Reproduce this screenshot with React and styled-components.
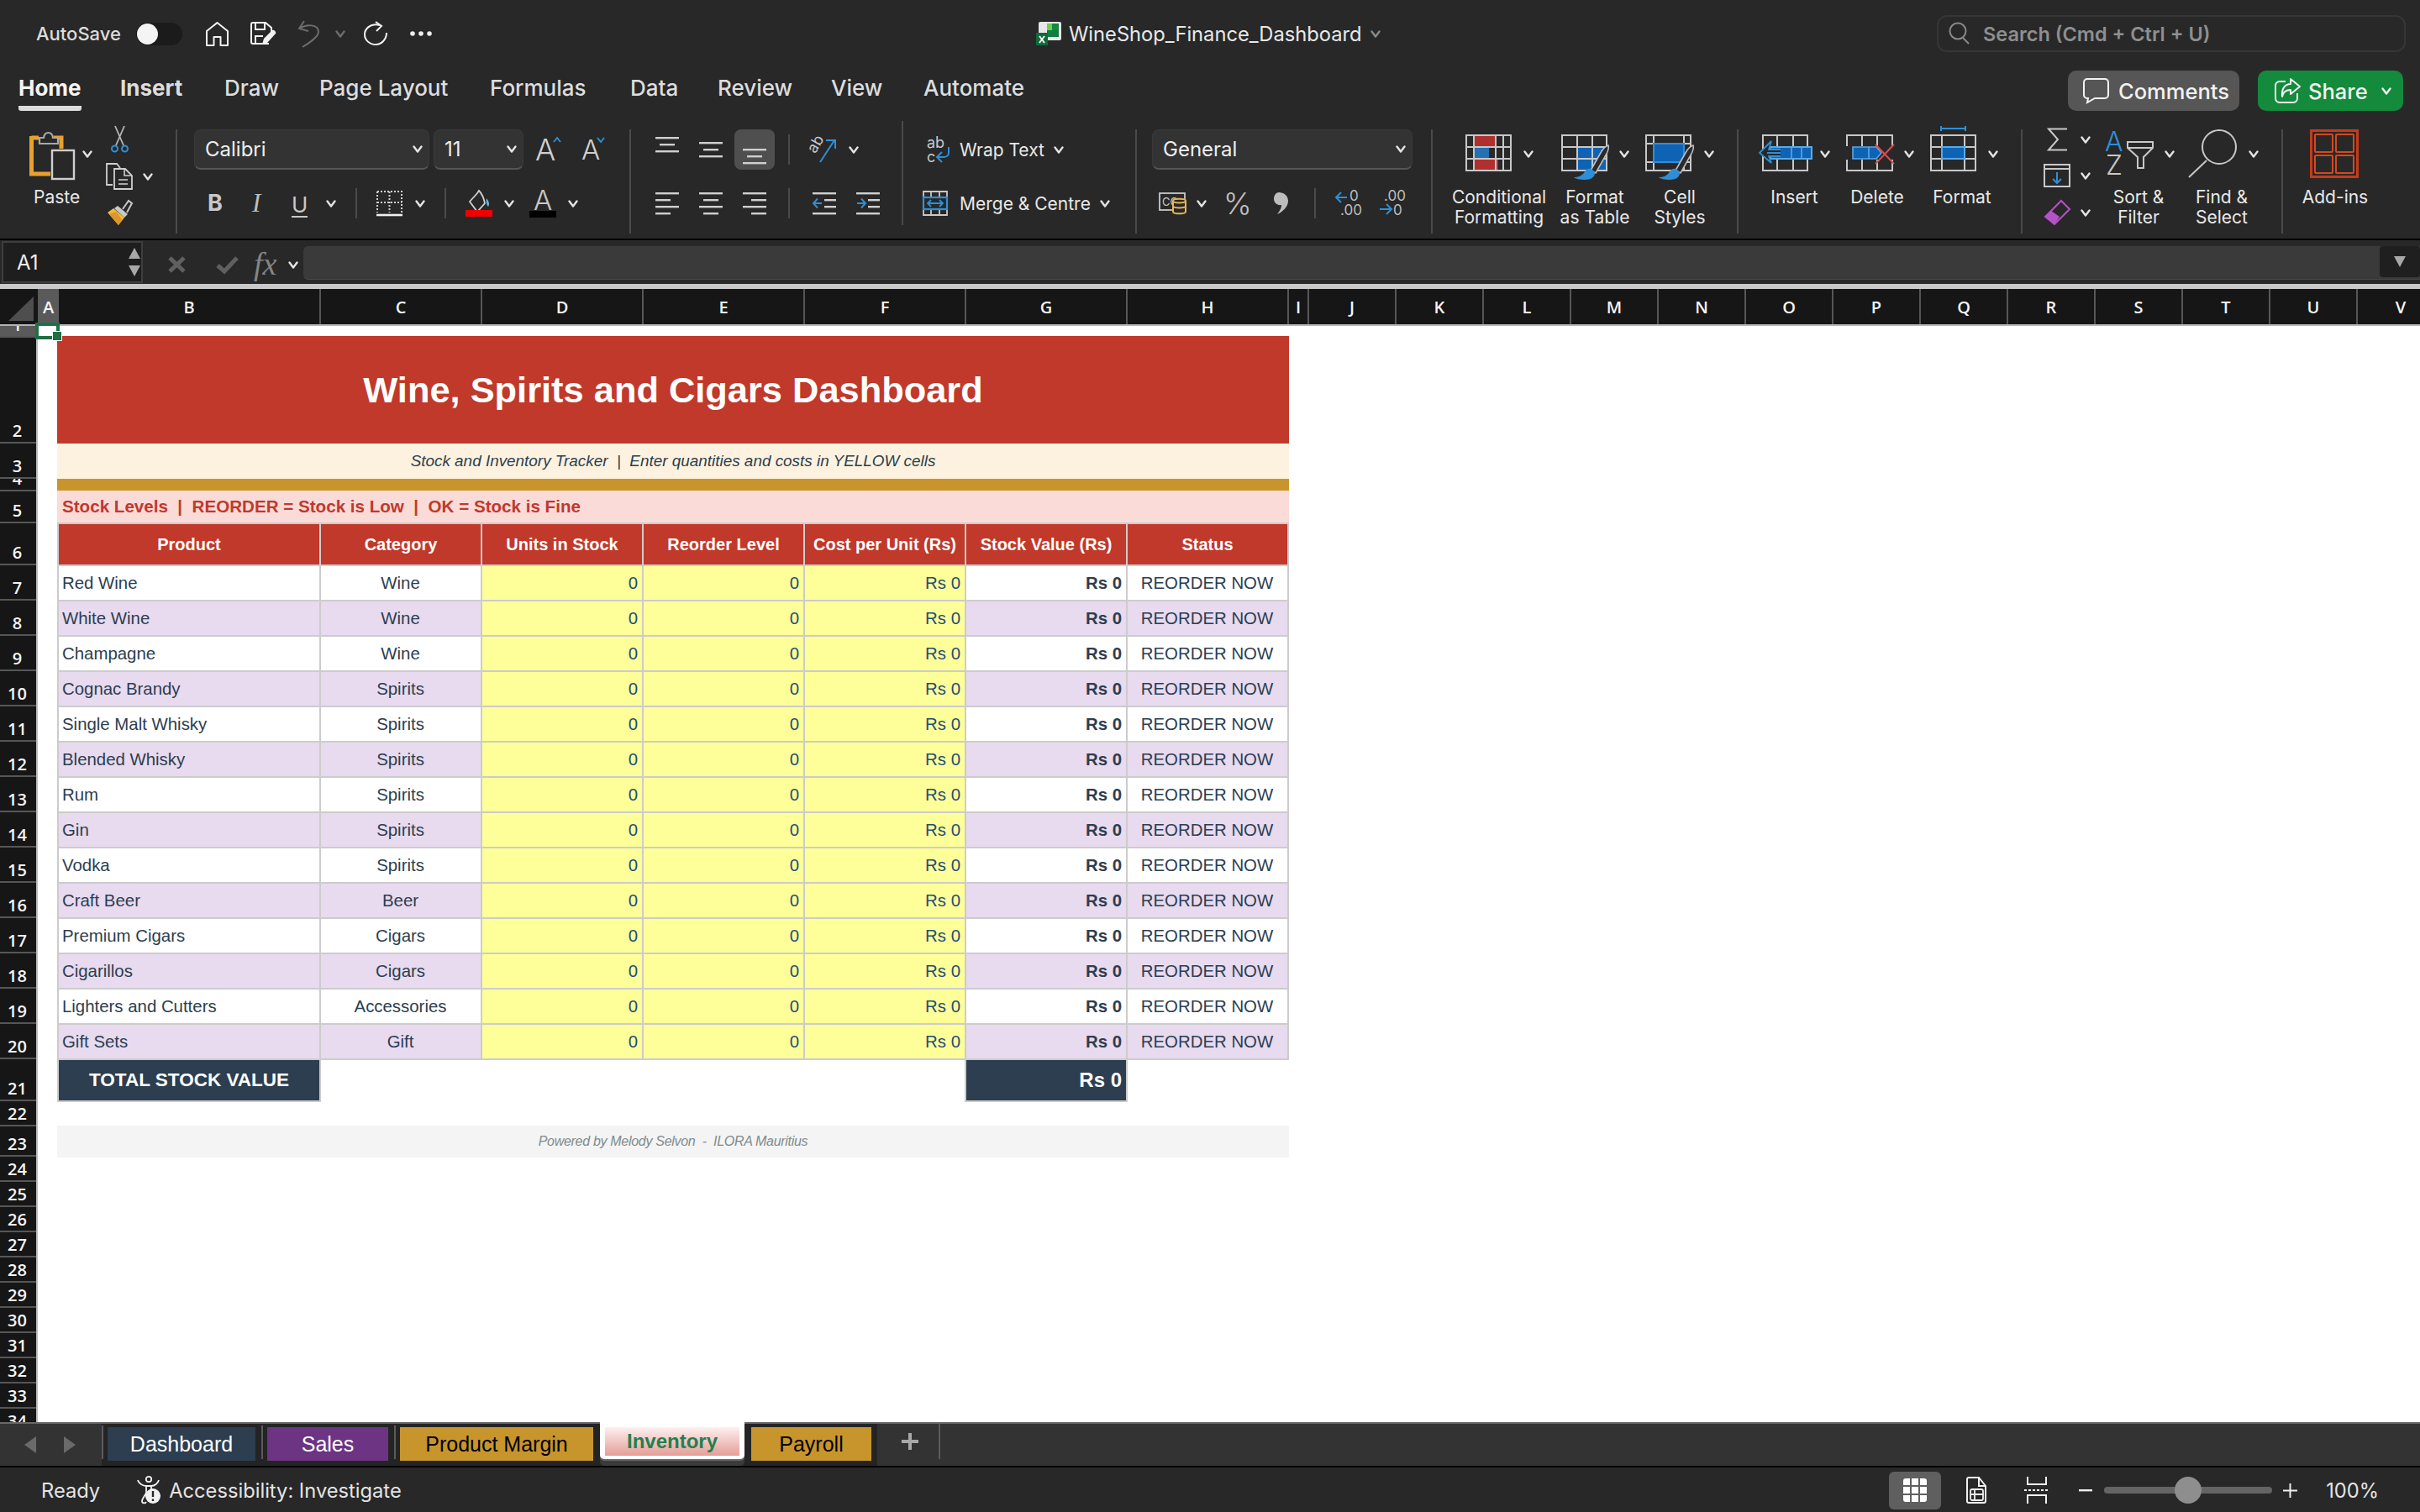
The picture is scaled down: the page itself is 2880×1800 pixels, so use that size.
import React from "react";
import styled, { createGlobalStyle } from "styled-components";

const UI = 'Inter, "Liberation Sans", sans-serif';
const CELL = '"Liberation Sans", Arial, sans-serif';
const HEAD = '"Open Sans", "Liberation Sans", sans-serif';
const LINE = "#c8c8c8";
const BLUE = "#2f8fd6";
const FILLBLUE = "#0f63b5";

const Global = createGlobalStyle`
  html, body { margin: 0; padding: 0; background: #282828; overflow: hidden; }
  * { box-sizing: border-box; }
`;

const Window = styled.div`
  width: 2880px; height: 1800px; overflow: hidden; display: flex; flex-direction: column;
  background: #282828; color: #e6e6e6; font-family: ${UI};
`;

/* ---------- generic drawing helpers ---------- */
const Svg = styled.svg`display: block; flex: none; overflow: visible;`;
const Ico = ({ w, h, children }) => (
  <Svg width={w} height={h} viewBox={`0 0 ${w} ${h}`} fill="none">{children}</Svg>
);
const Slot = styled.span`
  display: flex; flex: none; align-items: center;
  margin-left: ${p => p.$ml || 0}px; margin-top: ${p => p.$mt || 0}px;
`;
const Chev = ({ ml = 0, mt = 0, c = "#e4e4e4" }) => (
  <Slot $ml={ml} $mt={mt}>
    <Ico w={12} h={9}><path d="M1.5 1.5L6 7.5L10.5 1.5" stroke={c} strokeWidth="2.4" strokeLinecap="round" strokeLinejoin="round" /></Ico>
  </Slot>
);

/* ---------- title bar ---------- */
const TitleBar = styled.div`height: 80px; display: flex; align-items: center; flex: none;`;
const QuickAccess = styled.div`width: 1233px; padding-left: 43px; display: flex; align-items: center; flex: none;`;
const QuickLabel = styled.span`font-size: 22px; font-weight: 500; color: #dcdcdc; width: 119px; flex: none;`;
const Toggle = styled.span`
  width: 55px; height: 27px; border-radius: 14px; background: #1b1b1b; display: flex; align-items: center;
  padding-left: 1px; flex: none;
`;
const ToggleKnob = styled.span`width: 25px; height: 25px; border-radius: 50%; background: #f4f4f4;`;
const DocTitle = styled.div`width: 1072px; display: flex; align-items: center; flex: none;`;
const DocName = styled.span`font-size: 23.7px; color: #e8e8e8; margin-left: 9px; white-space: nowrap;`;
const SearchBox = styled.div`
  width: 558px; height: 44px; border: 2px solid #363636; border-radius: 12px; display: flex; align-items: center;
  padding-left: 12px; flex: none;
`;
const SearchText = styled.span`font-size: 23.5px; font-weight: 600; color: #8f8f8f; margin-left: 15px; white-space: nowrap;`;

/* ---------- menu tabs ---------- */
const MenuRow = styled.div`height: 56px; display: flex; align-items: flex-start; padding-left: 22px; flex: none;`;
const MenuTab = styled.div`width: ${p => p.$w}px; flex: none; height: 52px; padding-top: 9px;`;
const MenuLabel = styled.span`
  display: inline-block; height: 43px; font-size: 26px; line-height: 32px; white-space: nowrap;
  font-weight: ${p => p.$weight || 500};
  color: ${p => (p.$active ? "#f4f4f4" : "#dddddd")};
  border-bottom: 6px solid ${p => (p.$active ? "#dcdcdc" : "transparent")};
  border-radius: 0 0 3px 3px;
`;
const MenuActions = styled.div`margin-left: auto; margin-top: 4px; display: flex; gap: 22px; padding-right: 20px;`;
const PillButton = styled.div`
  height: 48px; width: ${p => p.$w}px; border-radius: 10px; background: ${p => p.$bg};
  display: flex; align-items: center; padding-left: ${p => p.$pl}px; font-size: 25.5px; font-weight: 500; color: #f2f2f2;
`;
const PillText = styled.span`margin-left: ${p => p.$ml}px;`;

/* ---------- ribbon ---------- */
const Ribbon = styled.div`
  height: 148px; padding-top: 8px; display: flex; align-items: flex-start; flex: none;
  font-size: 21px; color: #e8e8e8;
`;
const GroupSep = styled.div`
  width: 2px; height: 124px; flex: none; background: #4a4a4a; margin-top: ${p => p.$mt ?? 10}px;
`;
const Group = styled.div`
  width: ${p => p.$w}px; flex: none; display: flex; align-items: flex-start; padding-left: ${p => p.$pl || 0}px;
  padding-top: ${p => p.$pt ?? 10}px; flex-direction: ${p => (p.$col ? "column" : "row")};
`;
const ToolRow = styled.div`
  display: flex; align-items: center; flex: none; height: ${p => p.$h}px; margin-top: ${p => p.$mt || 0}px;
`;
const PasteCol = styled.div`width: 62px; flex: none; display: flex; flex-direction: column; align-items: flex-start;`;
const PasteLabel = styled.span`margin: 7px 0 0 5px; line-height: 28px;`;
const StackCol = styled.div`
  display: flex; flex-direction: column; flex: none; gap: ${p => p.$gap}px;
  margin-left: ${p => p.$ml}px; margin-top: ${p => p.$mt}px; width: ${p => p.$w}px;
`;
const StackRow = styled.div`display: flex; align-items: center;`;
const Select = styled.div`
  width: ${p => p.$w}px; height: 48px; flex: none; background: #333333; border: 1px solid #3a3a3a;
  border-bottom: 2px solid #555; border-radius: 8px; display: flex; align-items: center; justify-content: space-between;
  padding: 0 7px 0 12px; font-size: 24px; color: #eeeeee; margin-left: ${p => p.$ml || 0}px;
`;
const GrowA = styled.span`
  font-size: ${p => p.$size}px; font-weight: 300; color: #cfcfcf; line-height: 36px; width: ${p => p.$w}px; flex: none;
  margin-left: ${p => p.$ml}px; display: flex; align-items: flex-start; position: relative;
`;
const Caret = styled.span`position: absolute; right: 0; top: ${p => p.$top}px;`;
const FaceB = styled.span`font-size: 27px; font-weight: 700; color: #c8c8c8; margin-left: 16px; width: 16px; line-height: 30px;`;
const FaceI = styled.span`font-family: "Liberation Serif", serif; font-style: italic; font-size: 31px; color: #bdbdbd; margin-left: 37px; width: 14px; line-height: 30px;`;
const FaceU = styled.span`font-size: 26px; color: #c8c8c8; margin-left: 33px; width: 19px; line-height: 27px; border-bottom: 2.5px solid #c8c8c8; text-align: center; margin-top: 5px;`;
const MiniSep = styled.div`width: 2px; height: 36px; background: #4a4a4a; flex: none; margin-left: ${p => p.$ml}px;`;
const ColorA = styled.div`
  width: 32px; margin-left: ${p => p.$ml}px; display: flex; flex-direction: column; align-items: center; flex: none;
  font-size: 33px; font-weight: 300; color: #c8c8c8; line-height: 26px; height: 34px;
`;
const ColorBar = styled.span`display: block; width: 32px; height: 8px; background: ${p => p.$c}; flex: none;`;
const ActiveTool = styled.div`
  width: 48px; height: 48px; margin-left: ${p => p.$ml}px; border-radius: 8px; background: #4f4f4f;
  display: flex; justify-content: center; flex: none;
`;
const ToolText = styled.span`margin-left: ${p => p.$ml}px; white-space: nowrap; font-size: 21px;`;
const Percent = styled.span`font-size: 36px; font-weight: 300; color: #c0c0c0; margin-left: ${p => p.$ml}px; width: 31px; line-height: 36px; flex: none;`;
const BigTool = styled.div`
  width: ${p => p.$w}px; flex: none; margin-left: ${p => p.$ml || 0}px; padding-top: ${p => p.$pt || 0}px; display: flex; flex-direction: column;
`;
const BigIcon = styled.div`height: 69px; display: flex; align-items: flex-start; padding-left: ${p => p.$pl || 0}px; flex: none;`;
const BigLabel = styled.div`text-align: center; line-height: 24px; white-space: nowrap; display: flex; flex-direction: column; align-items: center;`;

/* ---------- formula bar ---------- */
const BlackRule = styled.div`height: ${p => p.$h}px; background: ${p => p.$c || "#000"}; flex: none;`;
const FormulaBar = styled.div`height: 52px; display: flex; align-items: flex-start; flex: none; background: #282828;`;
const NameBox = styled.div`
  width: 168px; height: 50px; margin: 1px 0 0 2px; flex: none; background: #1e1e1e; border: 2px solid #3e3e3e;
  display: flex; align-items: center; justify-content: space-between; padding: 0 0 0 16px; font-size: 24px; color: #eee;
`;
const NameSpin = styled.div`display: flex; flex-direction: column; gap: 8px; padding-right: 1px;`;
const Fx = styled.span`
  font-family: "Liberation Serif", serif; font-style: italic; font-size: 38px; color: #858585; margin-left: 18px; line-height: 36px; width: 31px;
`;
const FormulaInput = styled.div`
  flex: 1; height: 40px; margin: 7px 0 0 6px; background: #3a3a3a; border-radius: 6px 0 0 6px; border-bottom: 1px solid #484848;
  display: flex; justify-content: flex-end;
`;
const FormulaExpand = styled.div`
  width: 48px; height: 37px; background: #1f1f1f; border-radius: 4px; display: flex; align-items: center; justify-content: center;
`;

/* ---------- sheet ---------- */
const Sheet = styled.div`height: 1349px; flex: none; background: #fff; display: flex; flex-direction: column; overflow: hidden;`;
const ColHeaderRow = styled.div`
  height: 44px; display: flex; flex: none; background: #161616; border-bottom: 2px solid #b5b5b5;
`;
const Corner = styled.div`width: 45px; flex: none; padding: 9px 0 0 10px;`;
const ColHead = styled.div`
  width: ${p => p.$w}px; flex: none; background: ${p => (p.$sel ? "#5a5a5a" : "#161616")};
  border-right: ${p => (p.$sel ? "0" : "2px solid #565656")};
  display: flex; align-items: center; justify-content: center;
  font-family: ${HEAD}; font-size: 20px; font-weight: 600; color: #f5f5f5;
`;
const SheetBody = styled.div`flex: 1; display: flex; min-height: 0; position: relative;`;
const RowHeaders = styled.div`
  width: 45px; flex: none; background: #161616; border-right: 2px solid #bdbdbd; display: flex; flex-direction: column;
`;
const RowHead = styled.div`
  height: ${p => p.$h}px; flex: none; overflow: hidden; background: ${p => (p.$sel ? "#5a5a5a" : "#161616")};
  border-bottom: 2px solid #565656; display: flex; align-items: flex-end; justify-content: center;
  font-family: ${HEAD}; font-size: 20px; font-weight: 600; color: #f5f5f5; line-height: 26px; padding-right: 2px;
`;
const Cursor = styled.div`
  position: absolute; left: 42px; top: -4px; width: 29px; height: 20px; border: 4px solid #1d6f46;
  &::after { content: ""; position: absolute; right: -7px; bottom: -6px; width: 10px; height: 10px; background: #1d6f46; border: 1px solid #fff; }
`;
const Canvas = styled.div`flex: 1; padding: 12px 0 0 23px; display: flex; flex-direction: column; align-items: flex-start;`;
const Banner = styled.div`
  width: 1466px; height: ${p => p.$h}px; flex: none; background: ${p => p.$bg}; display: flex; align-items: center;
  justify-content: ${p => (p.$left ? "flex-start" : "center")}; padding-left: ${p => (p.$left ? 6 : 0)}px; white-space: pre;
  font-family: ${CELL};
`;
const BannerTitle = styled.span`font-size: 43.4px; font-weight: 700; color: #fff;`;
const BannerSub = styled.span`font-size: 18.9px; font-style: italic; color: #2c3e50;`;
const BannerNote = styled.span`font-size: 20.6px; font-weight: 700; color: #c0392b;`;
const BannerFoot = styled.span`font-size: 16px; font-style: italic; color: #7f8c8d; letter-spacing: -0.3px;`;
const TableGrid = styled.div`
  width: 1466px; flex: none; display: grid; grid-template-columns: 310px repeat(6, 190px);
  grid-template-rows: 48px repeat(14, 40px);
  gap: 2px; padding: 2px; background: #cccccc; font-family: ${CELL}; font-size: 20.4px;
`;
const HeadCell = styled.div`
  background: #c0392b; color: #fff; font-weight: 700; font-size: 20px; display: flex; align-items: center; justify-content: center; white-space: nowrap;
`;
const DataCell = styled.div`
  background: ${p => p.$bg}; color: ${p => p.$fg || "#2c3e50"}; font-weight: ${p => (p.$bold ? 700 : 400)};
  display: flex; align-items: center; padding: 0 5px 0 4px; white-space: nowrap;
  justify-content: ${p => p.$align || "flex-start"};
`;
const TotalRow = styled.div`display: flex; flex: none; font-family: ${CELL}; color: #fff; font-weight: 700;`;
const TotalCell = styled.div`
  width: ${p => p.$w}px; height: 50px; margin-left: ${p => p.$ml || 0}px; background: #2c3e50; border: 2px solid #cccccc; border-top: 0;
  display: flex; align-items: center; justify-content: ${p => p.$align}; font-size: ${p => p.$fs}px; padding-right: 5px; padding-left: 5px; flex: none;
`;
const FootGap = styled.div`height: 28px; flex: none;`;

/* ---------- sheet tabs ---------- */
const TabBar = styled.div`
  height: 52px; flex: none; background: #333333; border-top: 2px solid #686868; display: flex; align-items: flex-start; position: relative;
`;
const NavArrows = styled.div`width: 121px; height: 100%; display: flex; align-items: center; gap: 33px; padding: 0 0 0 29px; flex: none;`;
const TabStrip = styled.div`
  display: flex; height: 50px; background: #242424; padding-top: 4px; align-items: flex-start; flex: none;
`;
const TabSep = styled.div`width: 2px; height: 40px; background: #5a5a5a; flex: none; margin-top: -2px; margin-right: 5px;`;
const SheetTab = styled.div`
  width: ${p => p.$w}px; height: 40px; flex: none; background: ${p => p.$bg}; color: ${p => p.$fg};
  margin-right: ${p => p.$mr}px; display: flex; align-items: center; justify-content: center;
  font-family: ${CELL}; font-size: 25px;
`;
const ActiveTabFrame = styled.div`
  width: 172px; height: 44px; flex: none; background: #fff; margin: -6px 8px 0 8px; padding: 6px 6px 4px;
  border-radius: 0 0 5px 5px; box-shadow: 0 2px 0 #666, 0 8px 0 #3b3b3b;
`;
const ActiveTab = styled.div`
  height: 34px; background: linear-gradient(#fdf0f0, #e59d97); color: #23804f; font-family: ${CELL}; font-size: 24px; font-weight: 700;
  display: flex; align-items: center; justify-content: center;
`;
const AddTab = styled.div`width: 75px; height: 42px; flex: none; border-right: 2px solid #5a5a5a; display: flex; align-items: center; padding-left: 29px; margin-top: 0;`;
const StatusRule = styled.div`height: 2px; flex: none; background: #000;`;

/* ---------- status bar ---------- */
const StatusBar = styled.div`
  height: 54px; flex: none; display: flex; align-items: center; padding: 0 49px; font-size: 23.7px; color: #e4e4e4; white-space: nowrap;
`;
const StatusSpacer = styled.div`flex: 1;`;
const ViewActive = styled.div`
  width: 62px; height: 45px; border-radius: 6px; background: #5f5f5f; display: flex; align-items: center; justify-content: center; flex: none;
`;
const ZoomTrack = styled.div`width: 200px; height: 8px; background: #646464; border-radius: 4px; margin-left: 14px; position: relative; flex: none;`;
const ZoomKnob = styled.div`position: absolute; left: 84px; top: -12px; width: 32px; height: 32px; border-radius: 50%; background: #8e8e8e;`;
const ZoomPct = styled.span`margin-left: 34px;`;

/* ---------- icons ---------- */
const TableOutline = ({ w = 55, h = 43, y = 0, x = 0, cols, rows }) => (
  <g stroke={LINE} strokeWidth="2">
    <rect x={x + 1} y={y + 1} width={w - 2} height={h - 2} />
    {cols.map(c => <path key={c} d={`M${x + c} ${y}V${y + h}`} />)}
    {rows.map(r => <path key={r} d={`M${x} ${y + r}H${x + w}`} />)}
  </g>
);
const Brush = ({ dx = 0, dy = 0 }) => (
  <g transform={`translate(${dx} ${dy})`}>
    <path d="M42 0C43 3 42 6 40 10L27 33L21 30L34 7C36 4 39 1 42 0Z" fill="#2a2a2a" stroke="#bdbdbd" strokeWidth="1.6" />
    <path d="M15 30C19 26 24 28 26 33C26 38 21 41 14 41C8 41 3 40 1 38C6 38 11 37 15 30Z" fill={BLUE} />
  </g>
);

const icons = {
  home: <Ico w={29} h={30}><path d="M2 29V12L14.5 2L27 12V29H18.5V19H10.5V29Z" stroke="#f2f2f2" strokeWidth="2" strokeLinejoin="round" /></Ico>,
  save: (
    <Ico w={31} h={30}>
      <path d="M22 26H3a2 2 0 0 1-2-2V3a2 2 0 0 1 2-2h15l7 6v6" stroke="#f2f2f2" strokeWidth="2" />
      <path d="M6 1V9H17V1M6 26V17H15" stroke="#f2f2f2" strokeWidth="2" />
      <path d="M14 27L16 20L26 10C28 9 31 12 30 14L20 25Z" fill="#f2f2f2" />
    </Ico>
  ),
  undo: (
    <Ico w={27} h={32}>
      <path d="M8 1L2 10L13 13M2 10C10 5 25 4 25 14C25 20 14 27 6 32" stroke="#6c6c6c" strokeWidth="2" />
    </Ico>
  ),
  redo: (
    <Ico w={28} h={28}>
      <path d="M19 4C7 1 1 9 1 15C1 22 7 27 14 27C21 27 27 21 27 13" stroke="#f2f2f2" strokeWidth="2" />
      <path d="M14 0L21 5L15 11" stroke="#f2f2f2" strokeWidth="2" />
    </Ico>
  ),
  dots: <Ico w={26} h={6}><circle cx="3" cy="3" r="2.8" fill="#efefef" /><circle cx="13" cy="3" r="2.8" fill="#efefef" /><circle cx="23" cy="3" r="2.8" fill="#efefef" /></Ico>,
  excel: (
    <Ico w={30} h={28}>
      <rect x="3" y="0" width="27" height="22" rx="2" fill="#e8e8e8" />
      <rect x="13" y="2" width="6" height="8" fill="#6fd04e" />
      <rect x="19" y="2" width="8" height="10" fill="#12893e" />
      <rect x="13" y="10" width="14" height="8" fill="#107c41" />
      <rect x="0" y="13" width="14" height="15" fill="#0e6b3a" />
      <path d="M4 17L10 25M10 17L4 25" stroke="#fff" strokeWidth="2" />
    </Ico>
  ),
  search: <Ico w={26} h={26}><circle cx="11" cy="10" r="9.5" stroke="#8a8a8a" strokeWidth="2" /><path d="M17 18L24 25" stroke="#8a8a8a" strokeWidth="2" /></Ico>,
  comment: <Ico w={32} h={30}><path d="M6 1H27a4 4 0 0 1 4 4V20a4 4 0 0 1-4 4H15L6 29L7 24H6a4 4 0 0 1-4-4V5a4 4 0 0 1 4-4Z" stroke="#f2f2f2" strokeWidth="2" /></Ico>,
  share: (
    <Ico w={31} h={30}>
      <path d="M13 4H6a5 5 0 0 0-5 5V24a5 5 0 0 0 5 5H22a5 5 0 0 0 5-5V18" stroke="#f2f2f2" strokeWidth="2" />
      <path d="M19 1L30 10L19 19V14C13 14 10 17 9 22C8 13 12 7 19 7Z" stroke="#f2f2f2" strokeWidth="2" strokeLinejoin="round" />
    </Ico>
  ),
  paste: (
    <Ico w={54} h={60}>
      <path d="M2.5 10H11M2.5 8V53H25" stroke="#e9a02e" strokeWidth="5" />
      <path d="M29 10H38V23" stroke="#e9a02e" strokeWidth="5" />
      <path d="M12 17V10H17C18 2 27 2 28 10H34V17Z" stroke="#a8a8a8" strokeWidth="2.2" fill="#282828" />
      <rect x="27" y="25" width="26" height="34" stroke="#cfcfcf" strokeWidth="2.4" />
    </Ico>
  ),
  cut: (
    <Ico w={21} h={32}>
      <path d="M5 0L15 23M16 0L6 23" stroke="#b8b8b8" strokeWidth="1.8" />
      <circle cx="4.5" cy="27" r="3.5" stroke={BLUE} strokeWidth="2" /><circle cx="16.5" cy="27" r="3.5" stroke={BLUE} strokeWidth="2" />
    </Ico>
  ),
  copy: (
    <Ico w={32} h={32}>
      <path d="M8 26H1V1H13L17 6" stroke="#cfcfcf" strokeWidth="1.8" />
      <path d="M10 7H23L31 15V31H10Z" stroke="#cfcfcf" strokeWidth="1.8" />
      <path d="M22 7V15H31M15 20H26M15 25H26" stroke="#cfcfcf" strokeWidth="1.6" />
    </Ico>
  ),
  brush: (
    <Ico w={32} h={30}>
      <path d="M20 11L27 1L31 4L25 15" stroke="#c8c8c8" strokeWidth="2" />
      <path d="M14 7L26 17L22 21L10 10Z" fill="#c8c8c8" />
      <path d="M9 10L22 21L15 30L2 15L9 10Z" fill="#f0b93a" />
      <path d="M4 17L15 30L19 23L12 14Z" fill="#dd962a" />
    </Ico>
  ),
  borders: (
    <Ico w={31} h={30}>
      <path d="M1 1H30V26M1 1V26M15.5 1V26M1 14H30" stroke="#d0d0d0" strokeWidth="2" strokeDasharray="2 2" />
      <path d="M0 29H31" stroke="#efefef" strokeWidth="2.6" />
    </Ico>
  ),
  fill: (
    <Ico w={32} h={32}>
      <path d="M16 1C20 5 22 11 23 16L14 26L5 14L14 4Z" stroke="#cfcfcf" strokeWidth="1.8" />
      <path d="M25 10C28 14 29 17 27 20C25 18 24 14 25 10Z" fill="#6fb2e6" />
      <rect y="24" width="32" height="8" fill="#f00000" />
    </Ico>
  ),
  alignH: kind => {
    const xs = { l: [0, 18], c: [5, 18], r: [10, 18] }[kind];
    return (
      <Ico w={28} h={36}>
        {[5, 13, 21, 29].map((y, i) => (
          <rect key={y} x={i % 2 ? xs[0] : 0} y={y} width={i % 2 ? xs[1] : 28} height="2.4" fill="#cfcfcf" />
        ))}
      </Ico>
    );
  },
  alignV: top => (
    <Ico w={28} h={48}>
      {[0, 8, 16].map((d, i) => (
        <rect key={d} x={i === 1 ? 5 : 0} y={top + d} width={i === 1 ? 18 : 28} height="2.4" fill="#cfcfcf" />
      ))}
    </Ico>
  ),
  orient: (
    <Ico w={32} h={30}>
      <text x="1" y="15" transform="rotate(-60 8 14)" fontFamily={UI} fontSize="18" fill="#c8c8c8">ab</text>
      <path d="M11 30L28 4M18 4H29V14" stroke={BLUE} strokeWidth="2" />
    </Ico>
  ),
  indentL: (
    <Ico w={28} h={36}>
      <rect y="5" width="28" height="2.4" fill="#cfcfcf" /><rect x="14" y="13" width="14" height="2.4" fill="#cfcfcf" />
      <rect x="14" y="21" width="14" height="2.4" fill="#cfcfcf" /><rect y="29" width="28" height="2.4" fill="#cfcfcf" />
      <path d="M11 18H1M6 12.5L1 18L6 23.5" stroke={BLUE} strokeWidth="2" />
    </Ico>
  ),
  indentR: (
    <Ico w={28} h={36}>
      <rect y="5" width="28" height="2.4" fill="#cfcfcf" /><rect x="14" y="13" width="14" height="2.4" fill="#cfcfcf" />
      <rect x="14" y="21" width="14" height="2.4" fill="#cfcfcf" /><rect y="29" width="28" height="2.4" fill="#cfcfcf" />
      <path d="M1 18H11M6 12.5L11 18L6 23.5" stroke={BLUE} strokeWidth="2" />
    </Ico>
  ),
  wrap: (
    <Ico w={28} h={32}>
      <text x="0" y="14" fontFamily={UI} fontSize="18" fill="#c8c8c8">ab</text>
      <text x="0" y="31" fontFamily={UI} fontSize="18" fill="#c8c8c8">c</text>
      <path d="M26 13V20C26 24 22 25 20 25H13M18 19L12 25L18 31" stroke={BLUE} strokeWidth="2" />
    </Ico>
  ),
  merge: (
    <Ico w={30} h={30}>
      <path d="M1 1H29V29H1ZM10 1V8M20 1V8M10 22V29M20 22V29" stroke={LINE} strokeWidth="1.8" />
      <rect x="1" y="8" width="28" height="14" stroke={BLUE} strokeWidth="2.2" />
      <path d="M6 15H24M10 11L6 15L10 19M20 11L24 15L20 19" stroke={BLUE} strokeWidth="1.8" />
    </Ico>
  ),
  number: (
    <Ico w={33} h={26}>
      <rect x="1" y="1" width="30" height="20" stroke="#c8c8c8" strokeWidth="1.8" />
      <text x="4" y="16" fontFamily={UI} fontSize="13" fill="#c8c8c8">CC</text>
      <path d="M17 10C17 7 32 7 32 10V23C32 26 17 26 17 23Z" fill="#282828" stroke="#e6b654" strokeWidth="2" />
      <path d="M17 11C20 13 29 13 32 11M17 17C20 19 29 19 32 17" stroke="#e6b654" strokeWidth="2" />
    </Ico>
  ),
  comma: <Ico w={17} h={26}><path d="M6 0C12 0 17 4 17 10C17 17 11 23 4 26C8 21 9 18 9 15C4 16 0 12 0 8C0 3 3 0 6 0Z" fill="#bdbdbd" /></Ico>,
  decUp: (
    <Ico w={31} h={30}>
      <text x="17" y="12" fontFamily={UI} fontSize="17" fill="#bdbdbd">0</text>
      <text x="6" y="29" fontFamily={UI} fontSize="17" fill="#bdbdbd">.00</text>
      <path d="M14 8H1M7 2L1 8L7 14" stroke={BLUE} strokeWidth="2" />
    </Ico>
  ),
  decDown: (
    <Ico w={31} h={30}>
      <text x="6" y="12" fontFamily={UI} fontSize="17" fill="#bdbdbd">.00</text>
      <text x="17" y="29" fontFamily={UI} fontSize="17" fill="#bdbdbd">0</text>
      <path d="M1 22H15M9 16L15 22L9 28" stroke={BLUE} strokeWidth="2" />
    </Ico>
  ),
  conditional: (
    <Ico w={55} h={44}>
      <rect x="10" y="1" width="26" height="14" fill="#b03030" />
      <rect x="10" y="15" width="18" height="14" fill="#2472b3" />
      <rect x="10" y="29" width="29" height="14" fill="#b03030" />
      <TableOutline w={55} h={44} cols={[10, 36, 45]} rows={[15, 29]} />
    </Ico>
  ),
  fmtTable: (
    <Ico w={57} h={54}>
      <rect x="19" y="15" width="36" height="28" fill={FILLBLUE} />
      <TableOutline w={55} h={44} cols={[19, 37]} rows={[15, 29]} />
      <Brush dx={14} dy={13} />
    </Ico>
  ),
  cellStyles: (
    <Ico w={60} h={54}>
      <TableOutline w={55} h={44} cols={[10, 46]} rows={[11, 33]} />
      <rect x="10" y="11" width="36" height="22" fill={FILLBLUE} stroke={BLUE} strokeWidth="2" />
      <Brush dx={15} dy={13} />
    </Ico>
  ),
  insert: (
    <Ico w={63} h={44}>
      <TableOutline x={4} w={55} h={44} cols={[18, 37]} rows={[]} />
      <rect x="14" y="15" width="49" height="14" fill={FILLBLUE} stroke="#5aa9e6" strokeWidth="2" />
      <path d="M39 15V29M51 15V29" stroke="#5aa9e6" strokeWidth="1.6" />
      <path d="M26 22H10M26 18H12L15 8L1 22L15 34L12 26H26" stroke={BLUE} strokeWidth="1.8" fill="#282828" />
    </Ico>
  ),
  del: (
    <Ico w={58} h={44}>
      <path d="M55 14V1H1V14M1 30V43H55V30M19 1V14M19 30V43M37 1V14M37 30V43" stroke={LINE} strokeWidth="2" />
      <path d="M8 15H36L42 22L36 29H8Z" fill={FILLBLUE} stroke="#5aa9e6" strokeWidth="1.6" />
      <path d="M27 15V29" stroke="#5aa9e6" strokeWidth="1.6" />
      <path d="M35 12L57 35M57 12L35 35" stroke="#e04a4a" strokeWidth="2" />
    </Ico>
  ),
  format: (
    <Ico w={55} h={54}>
      <path d="M13 3H42M13 0V6M42 0V6" stroke={BLUE} strokeWidth="2" />
      <TableOutline y={10} w={55} h={44} cols={[14, 41]} rows={[15, 29]} />
      <rect x="14" y="25" width="27" height="14" fill={FILLBLUE} stroke="#5aa9e6" strokeWidth="2" />
    </Ico>
  ),
  sigma: <Ico w={25} h={28}><path d="M24 1.5H2L13 14L2 26.5H24" stroke={LINE} strokeWidth="2" /></Ico>,
  fillDown: (
    <Ico w={32} h={28}>
      <rect x="1" y="1" width="30" height="26" stroke={LINE} strokeWidth="2" /><path d="M1 6H31" stroke={LINE} strokeWidth="2" />
      <path d="M16 10V23M11 18L16 23L21 18" stroke={BLUE} strokeWidth="2" />
    </Ico>
  ),
  clear: (
    <Ico w={32} h={30}>
      <path d="M21 1L31 11L13 29L2 20Z" stroke="#b552c9" strokeWidth="2" />
      <path d="M9 13L19 20L13 29L2 20Z" fill="#b552c9" />
    </Ico>
  ),
  sort: (
    <Ico w={57} h={52}>
      <text x="-1" y="24" fontFamily={UI} fontSize="32" fontWeight="300" fill={BLUE}>A</text>
      <text x="0" y="52" fontFamily={UI} fontSize="32" fontWeight="300" fill="#c8c8c8">Z</text>
      <path d="M26 13H56V20L45 31V44H38V31L26 20ZM26 20H56" stroke={LINE} strokeWidth="2" />
    </Ico>
  ),
  find: (
    <Ico w={58} h={58}>
      <circle cx="37" cy="21" r="20" stroke={LINE} strokeWidth="2" /><path d="M22 37L1 57" stroke={LINE} strokeWidth="2" />
    </Ico>
  ),
  addins: (
    <Ico w={58} h={58}>
      <rect x="1.5" y="1.5" width="55" height="55" stroke="#c63b1b" strokeWidth="3" />
      <rect x="6" y="6" width="21" height="21" rx="1" stroke="#d4491f" strokeWidth="2" />
      <rect x="31" y="6" width="21" height="21" rx="1" stroke="#d4491f" strokeWidth="2" />
      <rect x="6" y="31" width="21" height="21" rx="1" stroke="#d4491f" strokeWidth="2" />
      <rect x="31" y="31" width="21" height="21" rx="1" stroke="#d4491f" strokeWidth="2" />
    </Ico>
  ),
  cross: <Ico w={21} h={20}><path d="M2 2L19 18M19 2L2 18" stroke="#606060" strokeWidth="5" /></Ico>,
  check: <Ico w={27} h={20}><path d="M2 11L10 18L25 2" stroke="#606060" strokeWidth="5" /></Ico>,
  spinUp: <Ico w={14} h={13}><path d="M7 0L14 13H0Z" fill="#a8a8a8" /></Ico>,
  spinDown: <Ico w={14} h={13}><path d="M0 0H14L7 13Z" fill="#a8a8a8" /></Ico>,
  expand: <Ico w={14} h={13}><path d="M0 0H14L7 13Z" fill="#a8a8a8" /></Ico>,
  corner: <Ico w={30} h={29}><path d="M30 0V29H0Z" fill="#4e4e4e" /></Ico>,
  navL: <Ico w={14} h={20}><path d="M14 0V20L0 10Z" fill="#6a6a6a" /></Ico>,
  navR: <Ico w={14} h={20}><path d="M0 0V20L14 10Z" fill="#6a6a6a" /></Ico>,
  plus: <Ico w={20} h={20}><path d="M10 0V20M0 10H20" stroke="#a8a8a8" strokeWidth="4" /></Ico>,
  a11y: (
    <Ico w={30} h={34}>
      <circle cx="15" cy="4" r="3.2" stroke="#f2f2f2" strokeWidth="1.8" />
      <path d="M2 5C3 9 8 12 12 12H18C22 12 26 9 27 5M12 12V20C10 25 7 27 7 30C7 33 11 33 12 31M18 12V17" stroke="#f2f2f2" strokeWidth="1.8" />
      <circle cx="20" cy="24" r="9" fill="#f2f2f2" />
      <path d="M20 18V25M20 27.5V30" stroke="#282828" strokeWidth="2.4" />
    </Ico>
  ),
  gridView: (
    <Ico w={28} h={28}>
      <path d="M3 0H8V8H0V3A3 3 0 0 1 3 0ZM10 0H18V8H10ZM20 0H25A3 3 0 0 1 28 3V8H20ZM0 10H8V18H0ZM10 10H18V18H10ZM20 10H28V18H20ZM0 20H8V28H3A3 3 0 0 1 0 25ZM10 20H18V28H10ZM20 20H28V25A3 3 0 0 1 25 28H20Z" fill="#fff" />
    </Ico>
  ),
  pageView: (
    <Ico w={24} h={32}>
      <path d="M3 1H15L23 11V29A2 2 0 0 1 21 31H3A2 2 0 0 1 1 29V3A2 2 0 0 1 3 1Z" stroke="#f0f0f0" strokeWidth="2" />
      <path d="M15 1V11H23" stroke="#f0f0f0" strokeWidth="2" />
      <rect x="5" y="15" width="15" height="13" rx="2" stroke="#f0f0f0" strokeWidth="1.8" /><path d="M10 15V28M5 21H20" stroke="#f0f0f0" strokeWidth="1.8" />
    </Ico>
  ),
  breakView: (
    <Ico w={30} h={32}>
      <path d="M4 0V9H26V0M4 32V22H26V32" stroke="#f0f0f0" strokeWidth="2" />
      <path d="M0 16H30" stroke="#f0f0f0" strokeWidth="2" strokeDasharray="3 2" />
    </Ico>
  ),
  minus: <Ico w={16} h={3}><rect width="16" height="2.4" fill="#eee" /></Ico>,
  zoomPlus: <Ico w={17} h={17}><path d="M8.5 0V17M0 8.5H17" stroke="#eee" strokeWidth="2" /></Ico>,
};
const caretUp = <Ico w={10} h={7}><path d="M1 6L5 1L9 6" stroke={BLUE} strokeWidth="2" /></Ico>;
const caretDown = <Ico w={10} h={7}><path d="M1 1L5 6L9 1" stroke={BLUE} strokeWidth="2" /></Ico>;

/* ---------- data ---------- */
const MENU = [["Home", 121, 700], ["Insert", 124, 650], ["Draw", 113], ["Page Layout", 203], ["Formulas", 167], ["Data", 104], ["Review", 135], ["View", 110], ["Automate", 150]];
const COLS = [["A", 25, true], ["B", 312], ["C", 192], ["D", 192], ["E", 192], ["F", 192], ["G", 192], ["H", 192], ["I", 24],
  ...["J", "K", "L", "M", "N", "O", "P", "Q", "R", "S", "T", "U", "V"].map(l => [l, 104])];
const ROWH = [[1, 14, true], [2, 126], [3, 42], [4, 15], [5, 38], [6, 50],
  ...Array.from({ length: 14 }, (_, i) => [i + 7, 42]), [21, 50], [22, 30], [23, 36],
  ...Array.from({ length: 11 }, (_, i) => [i + 24, 30])];
const HEADS = ["Product", "Category", "Units in Stock", "Reorder Level", "Cost per Unit (Rs)", "Stock Value (Rs)", "Status"];
const ITEMS = [["Red Wine", "Wine"], ["White Wine", "Wine"], ["Champagne", "Wine"], ["Cognac Brandy", "Spirits"], ["Single Malt Whisky", "Spirits"],
  ["Blended Whisky", "Spirits"], ["Rum", "Spirits"], ["Gin", "Spirits"], ["Vodka", "Spirits"], ["Craft Beer", "Beer"], ["Premium Cigars", "Cigars"],
  ["Cigarillos", "Cigars"], ["Lighters and Cutters", "Accessories"], ["Gift Sets", "Gift"]];

const TableRow = ({ name, cat, odd }) => {
  const bg = odd ? "#e8daef" : "#ffffff";
  const inp = "#ffff99";
  const ink = "#1f4e79";
  return (
    <>
      <DataCell $bg={bg}>{name}</DataCell>
      <DataCell $bg={bg} $align="center">{cat}</DataCell>
      <DataCell $bg={inp} $fg={ink} $align="flex-end">0</DataCell>
      <DataCell $bg={inp} $fg={ink} $align="flex-end">0</DataCell>
      <DataCell $bg={inp} $fg={ink} $align="flex-end">Rs 0</DataCell>
      <DataCell $bg={bg} $bold $align="flex-end">Rs 0</DataCell>
      <DataCell $bg={bg} $align="center">REORDER NOW</DataCell>
    </>
  );
};

export default function App() {
  return (
    <Window>
      <Global />
      <TitleBar>
        <QuickAccess>
          <QuickLabel>AutoSave</QuickLabel>
          <Toggle><ToggleKnob /></Toggle>
          <Slot $ml={27}>{icons.home}</Slot>
          <Slot $ml={25} $mt={2}>{icons.save}</Slot>
          <Slot $ml={25}>{icons.undo}</Slot>
          <Chev ml={18} c="#6c6c6c" />
          <Slot $ml={22}>{icons.redo}</Slot>
          <Slot $ml={27}>{icons.dots}</Slot>
        </QuickAccess>
        <DocTitle>
          {icons.excel}
          <DocName>WineShop_Finance_Dashboard</DocName>
          <Chev ml={10} c="#8a8a8a" />
        </DocTitle>
        <SearchBox>
          {icons.search}
          <SearchText>Search (Cmd + Ctrl + U)</SearchText>
        </SearchBox>
      </TitleBar>

      <MenuRow>
        {MENU.map(([t, w, wt]) => (
          <MenuTab key={t} $w={w}><MenuLabel $active={t === "Home"} $weight={wt}>{t}</MenuLabel></MenuTab>
        ))}
        <MenuActions>
          <PillButton $w={204} $bg="#565656" $pl={17}>{icons.comment}<PillText $ml={11}>Comments</PillText></PillButton>
          <PillButton $w={173} $bg="#138a3c" $pl={20}>{icons.share}<PillText $ml={9}>Share</PillText><Chev ml={16} c="#f2f2f2" /></PillButton>
        </MenuActions>
      </MenuRow>

      <Ribbon>
        <Group $w={209} $pl={35} $pt={0}>
          <PasteCol>
            <Slot $mt={10}>{icons.paste}</Slot>
            <PasteLabel>Paste</PasteLabel>
          </PasteCol>
          <Chev ml={1} mt={35} />
          <StackCol $ml={16} $mt={6} $w={60} $gap={12}>
            <StackRow><Slot $ml={6}>{icons.cut}</Slot></StackRow>
            <StackRow>{icons.copy}<Chev ml={12} /></StackRow>
            <StackRow>{icons.brush}</StackRow>
          </StackCol>
        </Group>
        <GroupSep />
        <Group $w={538} $pl={20} $col>
          <ToolRow $h={48}>
            <Select $w={280}>Calibri<Chev /></Select>
            <Select $w={107} $ml={5}>11<Chev /></Select>
            <GrowA $size={36} $w={31} $ml={14}>A<Caret $top={3}>{caretUp}</Caret></GrowA>
            <GrowA $size={33} $w={28} $ml={24}>A<Caret $top={3}>{caretDown}</Caret></GrowA>
          </ToolRow>
          <ToolRow $h={36} $mt={22}>
            <FaceB>B</FaceB>
            <FaceI>I</FaceI>
            <FaceU>U</FaceU>
            <Chev ml={22} />
            <MiniSep $ml={23} />
            <Slot $ml={23}>{icons.borders}</Slot>
            <Chev ml={15} />
            <MiniSep $ml={23} />
            <Slot $ml={23}>{icons.fill}</Slot>
            <Chev ml={14} />
            <ColorA $ml={18}>A<ColorBar $c="#000" /></ColorA>
            <Chev ml={14} />
          </ToolRow>
        </Group>
        <GroupSep />
        <Group $w={322} $pl={29} $col>
          <ToolRow $h={48}>
            {icons.alignV(9)}
            <Slot $ml={24}>{icons.alignV(15)}</Slot>
            <ActiveTool $ml={14}>{icons.alignV(23)}</ActiveTool>
            <MiniSep $ml={16} />
            <Slot $ml={25}>{icons.orient}</Slot>
            <Chev ml={13} />
          </ToolRow>
          <ToolRow $h={36} $mt={22}>
            {icons.alignH("l")}
            <Slot $ml={24}>{icons.alignH("c")}</Slot>
            <Slot $ml={24}>{icons.alignH("r")}</Slot>
            <MiniSep $ml={26} />
            <Slot $ml={27}>{icons.indentL}</Slot>
            <Slot $ml={24}>{icons.indentR}</Slot>
          </ToolRow>
        </Group>
        <GroupSep $mt={0} />
        <Group $w={276} $pl={23} $col>
          <ToolRow $h={48}>
            <Slot $ml={5}>{icons.wrap}</Slot>
            <ToolText $ml={11}>Wrap Text</ToolText>
            <Chev ml={11} />
          </ToolRow>
          <ToolRow $h={36} $mt={22}>
            {icons.merge}
            <ToolText $ml={14}>Merge &amp; Centre</ToolText>
            <Chev ml={11} />
          </ToolRow>
        </Group>
        <GroupSep />
        <Group $w={350} $pl={18} $col>
          <ToolRow $h={48}><Select $w={310}>General<Chev /></Select></ToolRow>
          <ToolRow $h={36} $mt={22}>
            <Slot $ml={8}>{icons.number}</Slot>
            <Chev ml={12} />
            <Percent $ml={20}>%</Percent>
            <Slot $ml={29}>{icons.comma}</Slot>
            <MiniSep $ml={31} />
            <Slot $ml={23}>{icons.decUp}</Slot>
            <Slot $ml={21}>{icons.decDown}</Slot>
          </ToolRow>
        </Group>
        <GroupSep />
        <Group $w={362} $pl={22}>
          <BigTool $w={114}>
            <BigIcon $pl={17}><Slot $mt={6}>{icons.conditional}</Slot><Chev ml={14} mt={25} /></BigIcon>
            <BigLabel><span>Conditional</span><span>Formatting</span></BigLabel>
          </BigTool>
          <BigTool $w={84} $ml={15}>
            <BigIcon $pl={2}><Slot $mt={6}>{icons.fmtTable}</Slot><Chev ml={12} mt={25} /></BigIcon>
            <BigLabel><span>Format</span><span>as Table</span></BigLabel>
          </BigTool>
          <BigTool $w={82} $ml={18}>
            <BigIcon><Slot $mt={6}>{icons.cellStyles}</Slot><Chev ml={10} mt={25} /></BigIcon>
            <BigLabel><span>Cell</span><span>Styles</span></BigLabel>
          </BigTool>
        </Group>
        <GroupSep />
        <Group $w={336} $pl={24}>
          <BigTool $w={85}>
            <BigIcon><Slot $mt={6}>{icons.insert}</Slot><Chev ml={10} mt={25} /></BigIcon>
            <BigLabel><span>Insert</span></BigLabel>
          </BigTool>
          <BigTool $w={74} $ml={19}>
            <BigIcon><Slot $mt={6}>{icons.del}</Slot><Chev ml={11} mt={25} /></BigIcon>
            <BigLabel><span>Delete</span></BigLabel>
          </BigTool>
          <BigTool $w={76} $ml={26}>
            <BigIcon><Slot $mt={-4}>{icons.format}</Slot><Chev ml={14} mt={25} /></BigIcon>
            <BigLabel><span>Format</span></BigLabel>
          </BigTool>
        </Group>
        <GroupSep />
        <Group $w={308} $pl={25} $pt={0}>
          <StackCol $ml={0} $mt={8} $w={56} $gap={15}>
            <StackRow><Slot $ml={4}>{icons.sigma}</Slot><Chev ml={15} /></StackRow>
            <StackRow>{icons.fillDown}<Chev ml={12} /></StackRow>
            <StackRow>{icons.clear}<Chev ml={12} /></StackRow>
          </StackCol>
          <BigTool $w={78} $ml={18} $pt={10}>
            <BigIcon><Slot $mt={2}>{icons.sort}</Slot><Chev ml={13} mt={25} /></BigIcon>
            <BigLabel><span>Sort &amp;</span><span>Filter</span></BigLabel>
          </BigTool>
          <BigTool $w={80} $ml={20} $pt={10}>
            <BigIcon>{icons.find}<Chev ml={14} mt={25} /></BigIcon>
            <BigLabel><span>Find &amp;</span><span>Select</span></BigLabel>
          </BigTool>
        </Group>
        <GroupSep />
        <Group $w={160} $pl={22}>
          <BigTool $w={80}>
            <BigIcon $pl={10}>{icons.addins}</BigIcon>
            <BigLabel><span>Add-ins</span></BigLabel>
          </BigTool>
        </Group>
      </Ribbon>

      <BlackRule $h={2} />
      <FormulaBar>
        <NameBox>A1<NameSpin>{icons.spinUp}{icons.spinDown}</NameSpin></NameBox>
        <Slot $ml={30} $mt={19}>{icons.cross}</Slot>
        <Slot $ml={36} $mt={19}>{icons.check}</Slot>
        <Slot $mt={10}><Fx>fx</Fx></Slot>
        <Chev ml={10} mt={25} />
        <FormulaInput><FormulaExpand>{icons.expand}</FormulaExpand></FormulaInput>
      </FormulaBar>
      <BlackRule $h={6} $c="#c9c9c9" />

      <Sheet>
        <ColHeaderRow>
          <Corner>{icons.corner}</Corner>
          {COLS.map(([l, w, s]) => <ColHead key={l} $w={w} $sel={s}>{l}</ColHead>)}
        </ColHeaderRow>
        <SheetBody>
          <RowHeaders>
            {ROWH.map(([n, h, s]) => <RowHead key={n} $h={h} $sel={s}>{n}</RowHead>)}
          </RowHeaders>
          <Cursor />
          <Canvas>
            <Banner $h={128} $bg="#c0392b"><BannerTitle>Wine, Spirits and Cigars Dashboard</BannerTitle></Banner>
            <Banner $h={42} $bg="#fdf2df"><BannerSub>Stock and Inventory Tracker  |  Enter quantities and costs in YELLOW cells</BannerSub></Banner>
            <Banner $h={14} $bg="#c8952c" />
            <Banner $h={38} $bg="#fadbd8" $left><BannerNote>Stock Levels  |  REORDER = Stock is Low  |  OK = Stock is Fine</BannerNote></Banner>
            <TableGrid>
              {HEADS.map(h => <HeadCell key={h}>{h}</HeadCell>)}
              {ITEMS.map(([n, c], i) => <TableRow key={n} name={n} cat={c} odd={i % 2 === 1} />)}
            </TableGrid>
            <TotalRow>
              <TotalCell $w={314} $align="center" $fs={22.5}>TOTAL STOCK VALUE</TotalCell>
              <TotalCell $w={194} $ml={766} $align="flex-end" $fs={24}>Rs 0</TotalCell>
            </TotalRow>
            <FootGap />
            <Banner $h={38} $bg="#f4f4f4"><BannerFoot>Powered by Melody Selvon  -  ILORA Mauritius</BannerFoot></Banner>
          </Canvas>
        </SheetBody>
      </Sheet>

      <TabBar>
        <NavArrows>{icons.navL}{icons.navR}</NavArrows>
        <TabStrip>
          <TabSep />
          <SheetTab $w={176} $bg="#2c3e50" $fg="#fff" $mr={7}>Dashboard</SheetTab>
          <TabSep />
          <SheetTab $w={144} $bg="#6c3483" $fg="#fff" $mr={7}>Sales</SheetTab>
          <TabSep />
          <SheetTab $w={230} $bg="#c8952c" $fg="#000" $mr={0}>Product Margin</SheetTab>
          <ActiveTabFrame><ActiveTab>Inventory</ActiveTab></ActiveTabFrame>
          <SheetTab $w={143} $bg="#c8952c" $fg="#000" $mr={7}>Payroll</SheetTab>
        </TabStrip>
        <AddTab>{icons.plus}</AddTab>
      </TabBar>
      <StatusRule />
      <StatusBar>
        <span>Ready</span>
        <Slot $ml={43}>{icons.a11y}</Slot>
        <Slot $ml={9}>Accessibility: Investigate</Slot>
        <StatusSpacer />
        <ViewActive>{icons.gridView}</ViewActive>
        <Slot $ml={30}>{icons.pageView}</Slot>
        <Slot $ml={45}>{icons.breakView}</Slot>
        <Slot $ml={35}>{icons.minus}</Slot>
        <ZoomTrack><ZoomKnob /></ZoomTrack>
        <Slot $ml={13}>{icons.zoomPlus}</Slot>
        <ZoomPct>100%</ZoomPct>
      </StatusBar>
    </Window>
  );
}
